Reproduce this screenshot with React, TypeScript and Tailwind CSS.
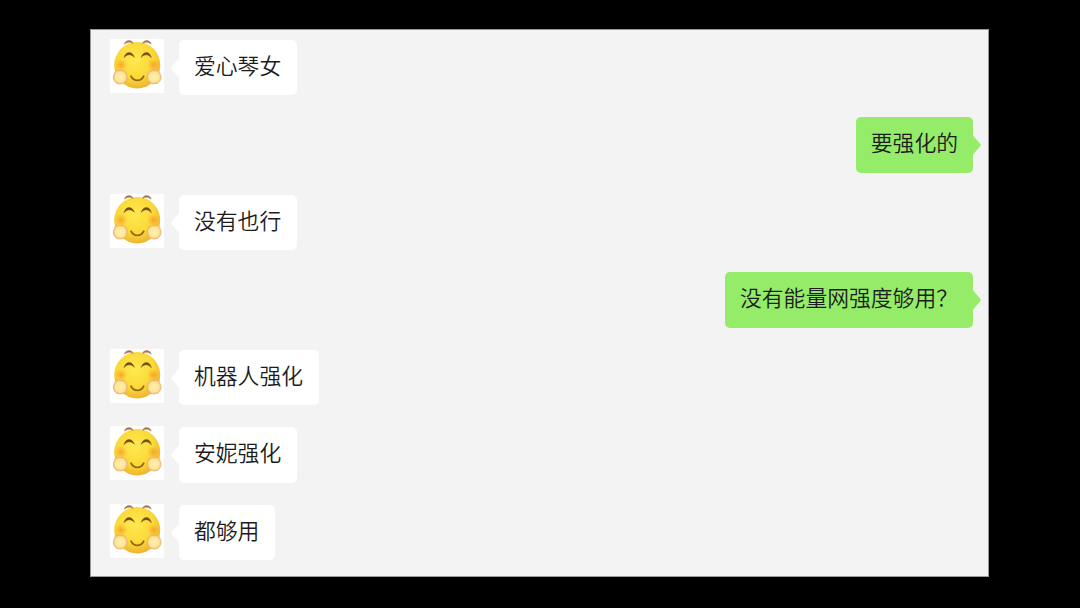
import React from "react";

type Message = { text: string, mine?: boolean };

const messages: Message[] = [
  { text: "爱心琴女" },
  { text: "要强化的", mine: true },
  { text: "没有也行" },
  { text: "没有能量网强度够用？", mine: true },
  { text: "机器人强化" },
  { text: "安妮强化" },
  { text: "都够用" },
];

const Avatar = () => (
  <svg viewBox="0 0 54 54" className="-mt-px h-[54px] w-[54px] shrink-0 bg-white">
    <defs>
      <radialGradient id="face" cx="0.45" cy="0.38" r="0.64">
        <stop offset="0" stopColor="#ffe950" />
        <stop offset="0.65" stopColor="#fad836" />
        <stop offset="1" stopColor="#eeb030" />
      </radialGradient>
      <radialGradient id="cheek">
        <stop offset="0" stopColor="#f7922f" stopOpacity="0.75" />
        <stop offset="1" stopColor="#f9a02c" stopOpacity="0" />
      </radialGradient>
      <radialGradient id="hand">
        <stop offset="0" stopColor="#fff0a8" />
        <stop offset="0.7" stopColor="#fde59c" />
        <stop offset="1" stopColor="#f3c67c" />
      </radialGradient>
    </defs>
    <ellipse cx="27.2" cy="26.2" rx="23" ry="23.2" fill="url(#face)" />
    <g fill="url(#cheek)">
      <ellipse cx="11" cy="26" rx="6.5" ry="6.5" />
      <ellipse cx="43.6" cy="26" rx="6.5" ry="6.5" />
    </g>
    <path d="M14.5 5.2C15 1 22 0 23.2 4.6C20.8 2.8 17.5 2.8 14.5 5.2ZM32.6 4.4C34 0 40.4 1 41.2 5.2C38.4 2.8 35.2 2.8 32.6 4.4Z" fill="#a87350" stroke="#a87350" strokeWidth="0.5" />
    <path d="M14 18.8C15.5 11.8 22.5 11.8 24.4 18.4C21.4 14.9 17 14.9 14 18.8ZM31.2 18.4C33.1 11.8 39.9 11.8 41.4 18.8C38.4 14.9 34.2 14.9 31.2 18.4Z" fill="#6f4b1c" stroke="#6f4b1c" strokeWidth="0.4" />
    <path d="M21 37.2C23.5 42.8 31.2 42.8 33.7 37.2" fill="none" stroke="#99651c" strokeWidth="1.8" strokeLinecap="round" />
    <g fill="url(#hand)" stroke="#e3ab68" strokeWidth="0.7">
      <path d="M4.4 34.6C5 31.4 8 30.4 10 31.8C12 30.7 15.4 31.6 16 34C17.6 35.8 17.6 40 16 42.2C13.8 45.4 8.4 45.8 5.6 43.4C3 41 2.8 37.2 4.4 34.6Z" />
      <path d="M50 34.6C49.4 31.4 46.4 30.4 44.4 31.8C42.4 30.7 39 31.6 38.4 34C36.8 35.8 36.8 40 38.4 42.2C40.6 45.4 46 45.8 48.8 43.4C51.4 41 51.6 37.2 50 34.6Z" />
    </g>
  </svg>
);

const Tail = (props: { mine?: boolean }) => (
  <svg
    viewBox="0 0 8 20"
    className={props.mine ? "absolute top-[18px] -right-[8px] h-5 w-2 text-[#95ec69]" : "absolute top-[18px] -left-[8px] h-5 w-2 -scale-x-100 text-white"}
  >
    <path d="M0 0.5L7.2 8.8Q8.2 10 7.2 11.2L0 19.5Z" fill="currentColor" />
  </svg>
);

const Row = ({ text, mine }: Message) => (
  <div className={mine ? "flex h-[55.5px] justify-end pr-[15px]" : "flex h-[55.5px] pl-[19px]"}>
    {!mine && <Avatar />}
    <div
      className={
        mine
          ? "relative rounded-[5px] bg-[#95ec69] px-[15px] pt-[9px]"
          : "relative ml-[15px] rounded-[5px] bg-white pr-4 pl-[15px] pt-[9px]"
      }
    >
      <Tail mine={mine} />
      <span className="block text-[21.8px] leading-8 whitespace-nowrap">{text}</span>
    </div>
  </div>
);

const App = () => {
  return <div className="h-[608px] w-full overflow-hidden bg-black pt-[29px] pl-[90px] font-['Noto_Sans_CJK_SC',sans-serif] font-[350] text-[#1c1c1c]">
    <div className="flex h-[548px] w-[899px] flex-col gap-[22px] border border-[#9a9a9a] bg-[#f3f3f3] pt-[9.5px]">
      {messages.map((message) => <Row key={message.text} {...message} />)}
    </div>
  </div>
}

export default App;
